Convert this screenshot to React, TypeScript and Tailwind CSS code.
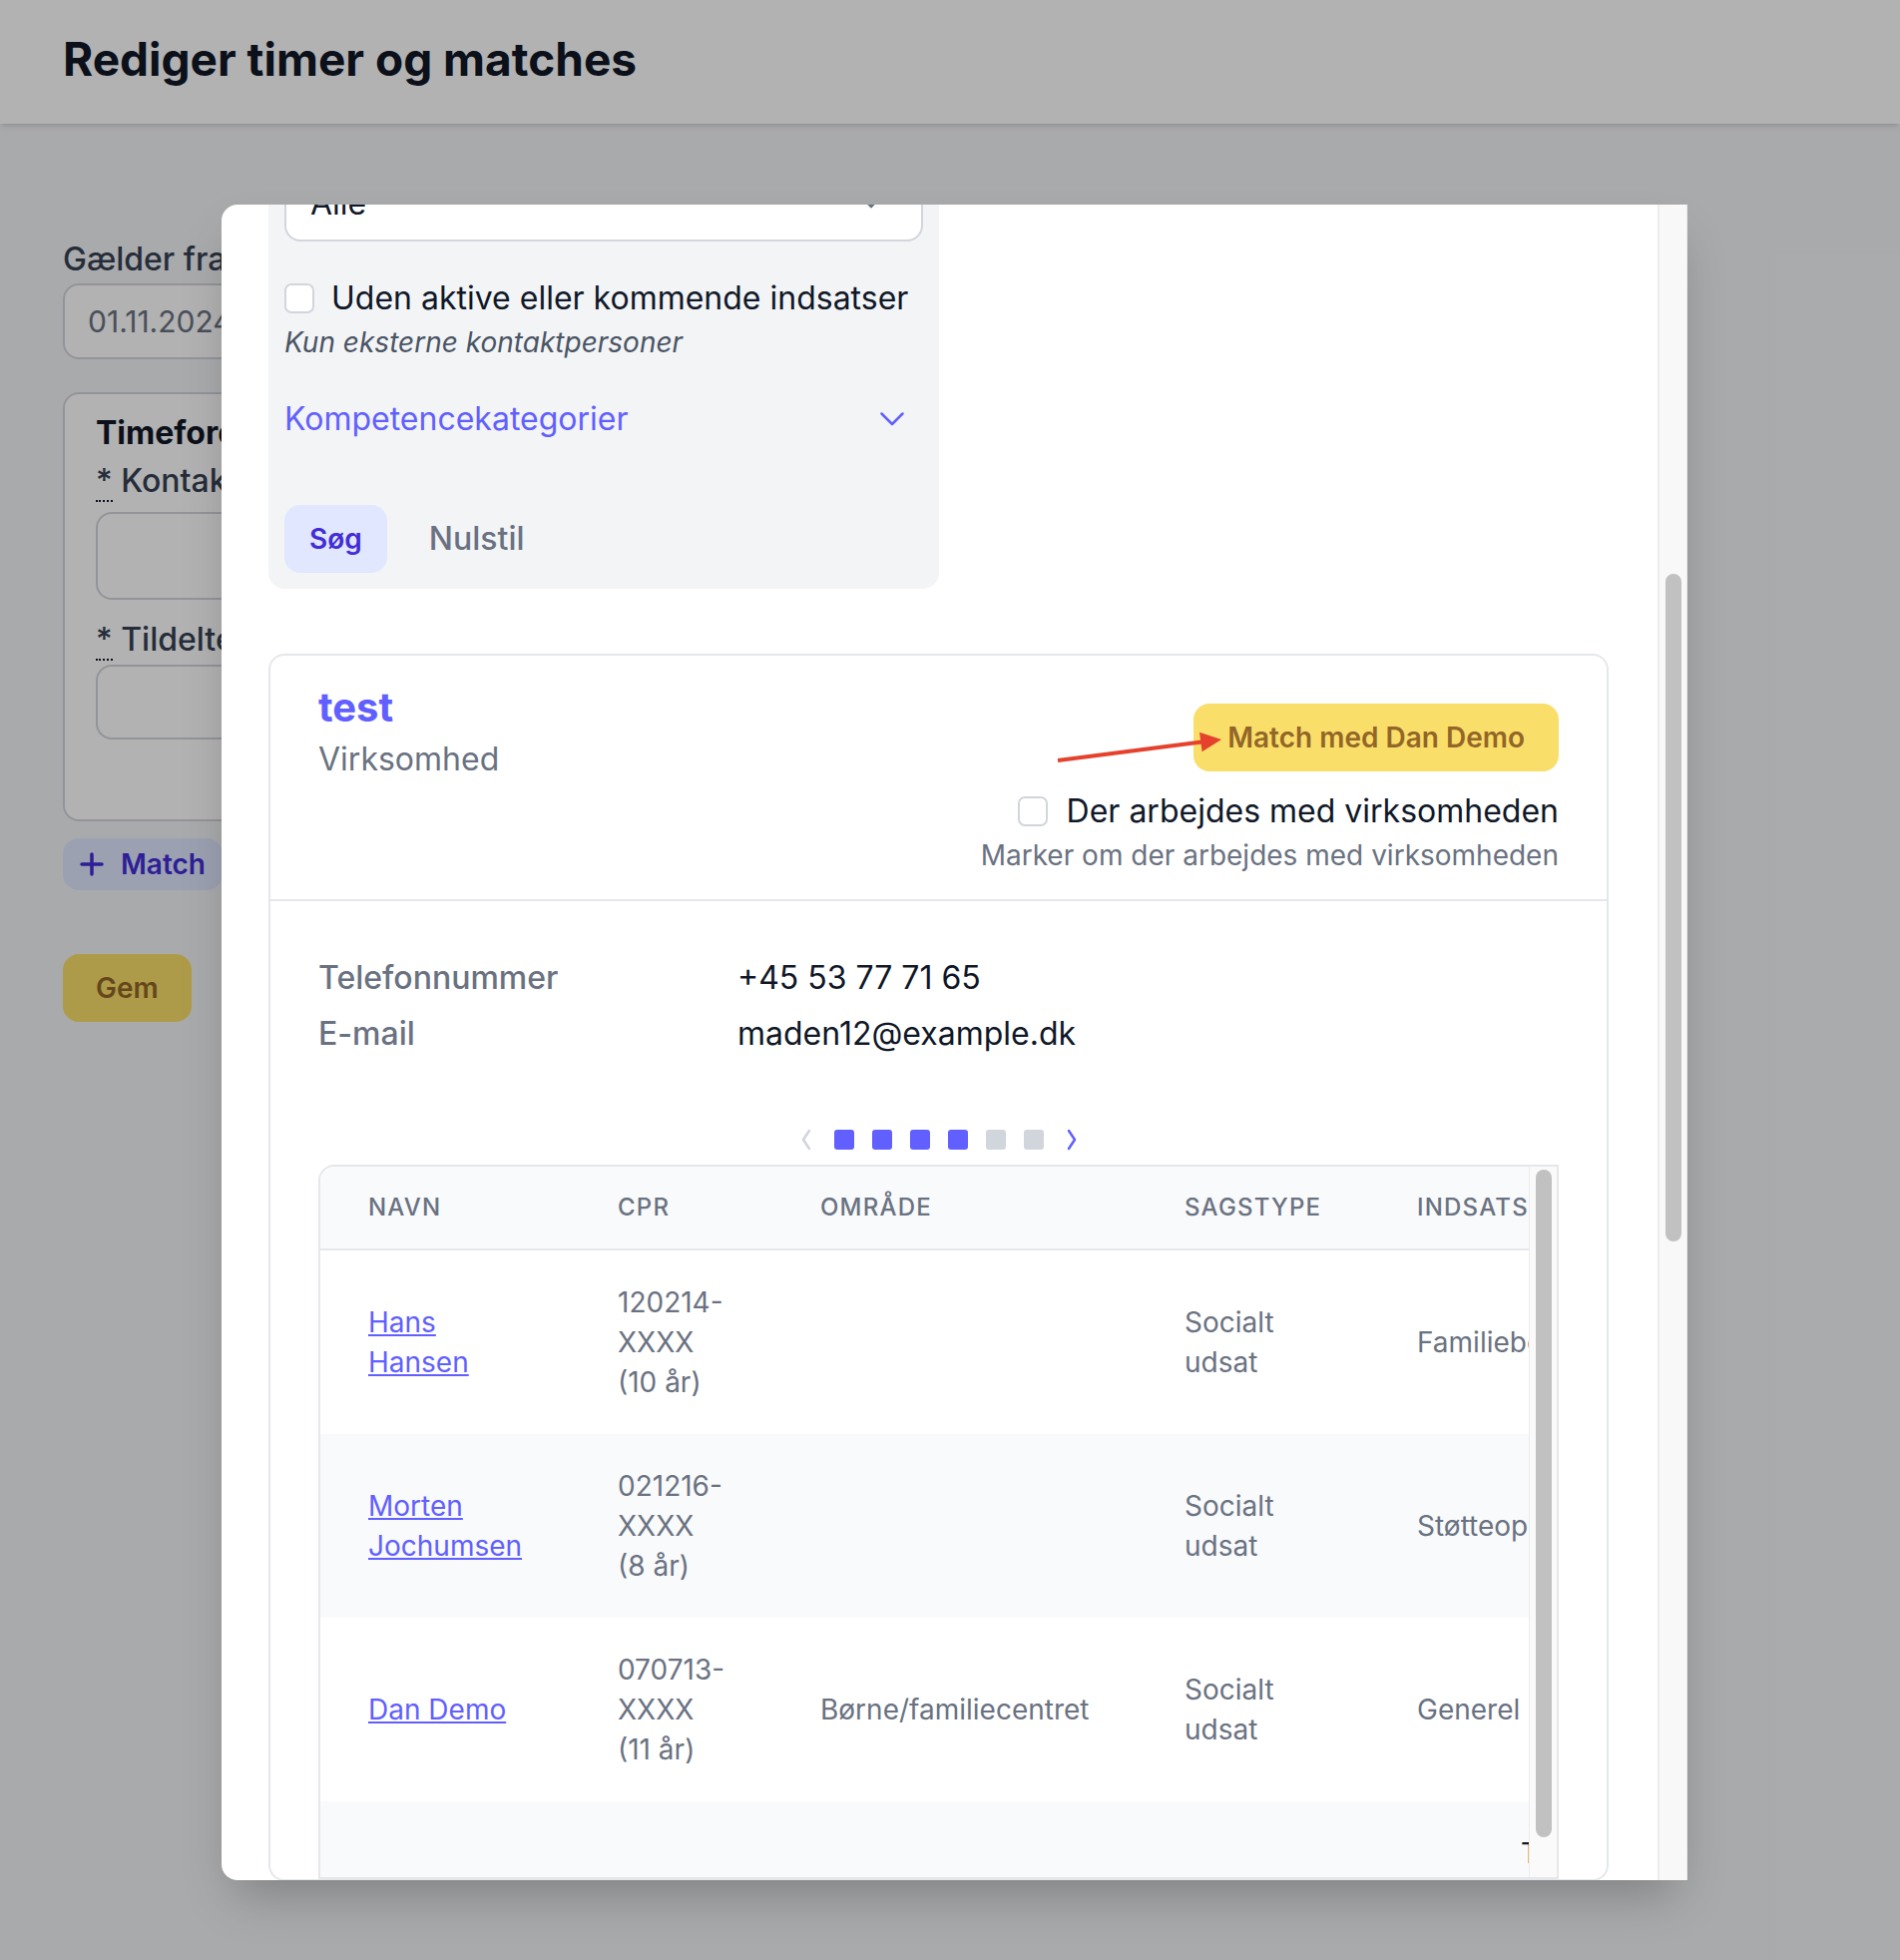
import React from "react";

type MatchRow = {
  id: number;
  name: string[];
  cpr: string[];
  area: string;
  caseType: string[];
  effort: string;
};

const matchRows: MatchRow[] = [
  {
    id: 1,
    name: ["Hans", "Hansen"],
    cpr: ["120214-", "XXXX", "(10 år)"],
    area: "",
    caseType: ["Socialt", "udsat"],
    effort: "Familiebehandling",
  },
  {
    id: 2,
    name: ["Morten", "Jochumsen"],
    cpr: ["021216-", "XXXX", "(8 år)"],
    area: "",
    caseType: ["Socialt", "udsat"],
    effort: "Støtteophold",
  },
  {
    id: 3,
    name: ["Dan Demo"],
    cpr: ["070713-", "XXXX", "(11 år)"],
    area: "Børne/familiecentret",
    caseType: ["Socialt", "udsat"],
    effort: "Generel indsats",
  },
];

const pages = [true, true, true, true, false, false];

const Checkbox = () => (
  <span className="inline-block h-[30px] w-[30px] shrink-0 rounded-[7px] border-2 border-gray-300 bg-white" />
);

const Lines = ({ lines }: { lines: string[] }) => (
  <>
    {lines.map((line, i) => (
      <React.Fragment key={i}>
        {line}
        {i < lines.length - 1 && <br />}
      </React.Fragment>
    ))}
  </>
);

const Required = () => (
  <abbr title="påkrævet" className="no-underline border-b-2 border-dotted border-gray-900">
    *
  </abbr>
);

const FilterPanel = () => (
  <div className="w-[672px] rounded-b-[16px] bg-gray-100 px-[16px] pt-[16px] pb-[12px]">
    <label className="block text-[28px] leading-[48px] font-medium text-gray-700">Status</label>
    <div className="mt-[8px] flex h-[76px] items-center justify-between rounded-[16px] border-2 border-gray-300 bg-white px-[24px] text-[32px] text-gray-900">
      <span>Alle</span>
      <svg width="20" height="12" viewBox="0 0 20 12" fill="none" className="mr-[16px] text-gray-500">
        <path d="M3 2l7 7 7-7" stroke="currentColor" strokeWidth="2.5" strokeLinecap="round" />
      </svg>
    </div>

    <label className="mt-[33px] flex items-center gap-[17px] text-[32px] leading-[48px] text-gray-900">
      <Checkbox />
      Uden aktive eller kommende indsatser
    </label>
    <p className="text-[28px] leading-[40px] italic text-gray-600">Kun eksterne kontaktpersoner</p>

    <button className="mt-[33px] flex w-full items-center justify-between pr-[19px] text-[32px] leading-[48px] text-indigo-500">
      Kompetencekategorier
      <svg width="24" height="14" viewBox="0 0 24 14" fill="none">
        <path d="M1.5 1.5L12 12 22.5 1.5" stroke="currentColor" strokeWidth="2.5" strokeLinecap="round" strokeLinejoin="round" />
      </svg>
    </button>

    <div className="mt-[58px] flex items-center gap-[18px]">
      <button className="rounded-[16px] bg-indigo-100 px-[25px] py-[14px] text-[28px] leading-[40px] font-semibold text-indigo-700">
        Søg
      </button>
      <button className="px-[24px] py-[14px] text-[32px] leading-[48px] font-medium text-gray-500">Nulstil</button>
    </div>
  </div>
);

const MatchTable = () => (
  <div className="mt-[13px] flex h-[716px] overflow-hidden rounded-tl-[16px] border-2 border-gray-200">
    <div className="flex-1 overflow-hidden">
      <table className="w-[1700px] table-fixed">
        <colgroup>
          <col className="w-[250px]" />
          <col className="w-[203px]" />
          <col className="w-[365px]" />
          <col className="w-[233px]" />
          <col className="w-[649px]" />
        </colgroup>
        <thead>
          <tr className="border-b-2 border-gray-200 bg-gray-50">
            {["Navn", "CPR", "Område", "Sagstype", "Indsatser"].map((h) => (
              <th
                key={h}
                className="px-[48px] pt-[25px] pb-[25px] text-left text-[24px] leading-[32px] font-medium uppercase tracking-wider text-gray-500"
              >
                {h}
              </th>
            ))}
          </tr>
        </thead>
        <tbody className="text-[28px] leading-[40px] text-gray-500">
          {matchRows.map((row, i) => (
            <tr key={row.id} className={i % 2 === 1 ? "bg-gray-50" : "bg-white"}>
              <td className="px-[48px] py-[32px] align-middle">
                <a href="#" className="text-indigo-500 underline">
                  <Lines lines={row.name} />
                </a>
              </td>
              <td className="px-[48px] py-[32px] align-middle">
                <Lines lines={row.cpr} />
              </td>
              <td className="whitespace-nowrap px-[48px] py-[32px] align-middle">{row.area}</td>
              <td className="px-[48px] py-[32px] align-middle">
                <Lines lines={row.caseType} />
              </td>
              <td className="whitespace-nowrap px-[48px] py-[32px] align-middle">{row.effort}</td>
            </tr>
          ))}
          <tr className="bg-gray-50">
            <td className="py-[32px]" colSpan={4} />
            <td className="whitespace-nowrap py-[32px] pl-[152px] align-middle text-gray-900">Total</td>
          </tr>
        </tbody>
      </table>
    </div>
    {/* vertical scrollbar of the table */}
    <div className="flex w-[28px] justify-center border-l border-[#ececec] bg-[#fafafa] pt-[3px]">
      <div className="h-[669px] w-[16px] rounded-full bg-[#c1c1c1]" />
    </div>
  </div>
);

const CompanyCard = () => (
  <div className="relative mt-[65px] rounded-[16px] border-2 border-gray-200 bg-white">
    <div className="flex items-start justify-between border-b-2 border-gray-200 px-[48px] pt-[24px] pb-[24px]">
      <div>
        <h3 className="text-[40px] leading-[56px] font-bold text-indigo-500">test</h3>
        <p className="text-[32px] leading-[48px] text-gray-500">Virksomhed</p>
      </div>
      <div className="mt-[24px] flex flex-col items-end">
        <button className="rounded-[16px] bg-[#f9df6a] px-[34px] py-[14px] text-[28px] leading-[40px] font-semibold text-[#936628]">
          Match med Dan Demo
        </button>
        <label className="mt-[16px] flex items-center gap-[19px] text-[32px] leading-[48px] text-gray-900">
          <Checkbox />
          Der arbejdes med virksomheden
        </label>
        <p className="text-[28px] leading-[40px] text-gray-500">Marker om der arbejdes med virksomheden</p>
      </div>
    </div>

    {/* red annotation arrow pointing at the match button */}
    <svg
      width="180"
      height="50"
      viewBox="0 0 180 50"
      className="pointer-events-none absolute left-[780px] top-[70px] z-10"
    >
      <line x1="9" y1="35" x2="153" y2="16.6" stroke="#e5412c" strokeWidth="4" />
      <polygon points="173,14 153.6,26.2 151,6.8" fill="#e5412c" />
    </svg>

    <div className="px-[48px] pt-[53px]">
      <dl className="grid grid-cols-[420px_1fr] gap-y-[8px] text-[32px] leading-[48px]">
        <dt className="font-medium text-gray-500">Telefonnummer</dt>
        <dd className="text-gray-900">+45 53 77 71 65</dd>
        <dt className="font-medium text-gray-500">E-mail</dt>
        <dd className="text-gray-900">maden12@example.dk</dd>
      </dl>

      <div className="mt-[70px] flex h-[24px] items-center justify-center gap-[18px]">
        <svg width="20" height="24" viewBox="0 0 20 24" fill="none" className="text-gray-300">
          <path d="M13 3L7 12l6 9" stroke="currentColor" strokeWidth="2.5" strokeLinecap="round" strokeLinejoin="round" />
        </svg>
        {pages.map((active, i) => (
          <span
            key={i}
            className={`h-[20px] w-[20px] rounded-[3px] ${active ? "bg-indigo-500" : "bg-gray-300"}`}
          />
        ))}
        <svg width="20" height="24" viewBox="0 0 20 24" fill="none" className="text-indigo-500">
          <path d="M7 3l6 9-6 9" stroke="currentColor" strokeWidth="2.5" strokeLinecap="round" strokeLinejoin="round" />
        </svg>
      </div>

      <MatchTable />
    </div>
  </div>
);

export default function App() {
  return (
    <div className="relative min-h-[1964px] overflow-hidden bg-gray-100 font-[Inter,'Noto_Sans',sans-serif] antialiased">
      <header className="flex h-[124px] items-center bg-white px-[63px] pb-[6px] shadow-md">
        <h1 className="text-[46px] leading-[64px] font-bold text-gray-900">Rediger timer og matches</h1>
      </header>

      <main className="w-[1100px] pl-[63px] pt-[112px]">
        <label className="block text-[32px] leading-[48px] font-medium text-gray-700">Gælder fra</label>
        <div className="flex h-[76px] w-[420px] items-center rounded-[16px] border-2 border-gray-300 bg-white px-[23px] text-[30px] text-gray-500">
          01.11.2024
        </div>

        <section className="mt-[33px] rounded-[16px] border-2 border-gray-300 bg-white px-[31px] pt-[15px] pb-[80px]">
          <h2 className="text-[32px] leading-[48px] font-bold text-gray-900">Timefordeling</h2>
          <label className="block text-[32px] leading-[48px] font-medium text-gray-700">
            <Required /> Kontaktperson
          </label>
          <div className="mt-[7px] h-[88px] rounded-[16px] border-2 border-gray-300 bg-white" />
          <label className="mt-[16px] block text-[32px] leading-[48px] font-medium text-gray-700">
            <Required /> Tildelte timer
          </label>
          <div className="mt-[1px] h-[75px] rounded-[16px] border-2 border-gray-300 bg-white" />
        </section>

        <button className="mt-[17px] flex items-center gap-[17px] rounded-[16px] bg-indigo-100 px-[17px] py-[6px] text-[28px] leading-[40px] font-semibold text-indigo-700">
          <svg width="24" height="24" viewBox="0 0 24 24" fill="none">
            <path d="M12 2v20M2 12h20" stroke="currentColor" strokeWidth="3.5" strokeLinecap="round" />
          </svg>
          Match
        </button>

        <button className="mt-[64px] block rounded-[16px] bg-[#f9df6a] px-[33px] py-[14px] text-[28px] leading-[40px] font-semibold text-[#936628]">
          Gem
        </button>
      </main>

      {/* dialog backdrop */}
      <div className="absolute inset-0 bg-black/30" />

      {/* dialog panel, scrolled down to the search results */}
      <div className="absolute left-[222px] top-[205px] flex h-[1679px] w-[1469px] overflow-hidden rounded-l-[16px] bg-white shadow-2xl">
        <div className="flex-1 overflow-hidden pl-[47px] pr-[49px]">
          <div className="-mt-[111px]">
            <FilterPanel />
            <CompanyCard />
          </div>
        </div>
        <div className="flex w-[30px] justify-center border-l-2 border-r border-[#ececec] bg-[#f8f8f8] pt-[370px]">
          <div className="h-[669px] w-[16px] rounded-full bg-[#c1c1c1]" />
        </div>
      </div>
    </div>
  );
}
